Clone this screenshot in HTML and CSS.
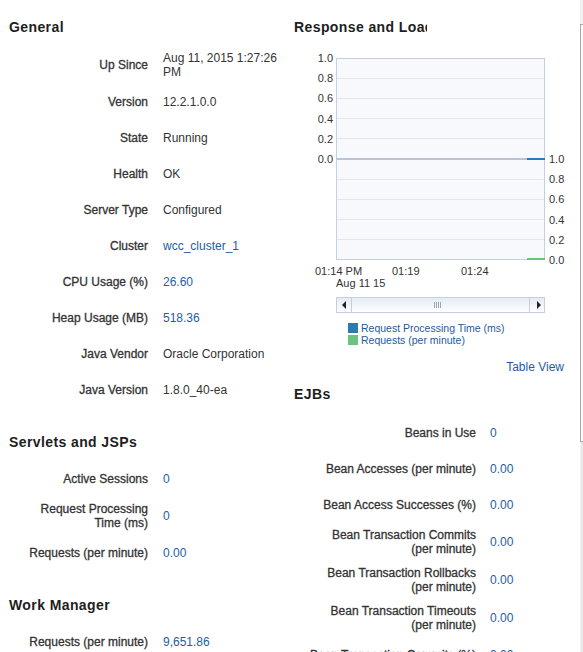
FILE: index.html
```html
<!DOCTYPE html>
<html lang="en">
<head>
    <meta charset="UTF-8">
    <title>Server Overview</title>
    <link rel="stylesheet" href="styles.css">
</head>
<body>
<div class="screen">
    <div class="page">
        <div class="col col-left">
            <h2 class="section-title">General</h2>
            <div class="form">
                <div class="label">Up Since</div><div class="value">Aug 11, 2015 1:27:26<br>PM</div>
                <div class="label">Version</div><div class="value">12.2.1.0.0</div>
                <div class="label">State</div><div class="value">Running</div>
                <div class="label">Health</div><div class="value">OK</div>
                <div class="label">Server Type</div><div class="value">Configured</div>
                <div class="label">Cluster</div><div class="value link">wcc_cluster_1</div>
                <div class="label">CPU Usage (%)</div><div class="value link">26.60</div>
                <div class="label">Heap Usage (MB)</div><div class="value link">518.36</div>
                <div class="label">Java Vendor</div><div class="value">Oracle Corporation</div>
                <div class="label">Java Version</div><div class="value">1.8.0_40-ea</div>
            </div>

            <h2 class="section-title">Servlets and JSPs</h2>
            <div class="form">
                <div class="label">Active Sessions</div><div class="value link">0</div>
                <div class="label">Request Processing<br>Time (ms)</div><div class="value link">0</div>
                <div class="label">Requests (per minute)</div><div class="value link">0.00</div>
            </div>

            <h2 class="section-title">Work Manager</h2>
            <div class="form">
                <div class="label">Requests (per minute)</div><div class="value link">9,651.86</div>
            </div>
        </div>

        <div class="col col-right">
            <h2 class="section-title chart-title">Response and Load</h2>
            <svg class="chart" width="286" height="302" xmlns="http://www.w3.org/2000/svg">
                <defs>
                    <linearGradient id="sb" x1="0" y1="0" x2="0" y2="1">
                        <stop offset="0" stop-color="#e4ebf4"/>
                        <stop offset="1" stop-color="#ffffff"/>
                    </linearGradient>
                </defs>
                <!-- plot -->
                <rect x="42.5" y="10.5" width="208" height="201" fill="#f8f9fc" stroke="#c5cfdf"/>
                <g stroke="#e1e6ef" stroke-width="1">
                    <line x1="43" y1="30.5" x2="250" y2="30.5"/>
                    <line x1="43" y1="50.5" x2="250" y2="50.5"/>
                    <line x1="43" y1="70.5" x2="250" y2="70.5"/>
                    <line x1="43" y1="90.5" x2="250" y2="90.5"/>
                    <line x1="43" y1="131.5" x2="250" y2="131.5"/>
                    <line x1="43" y1="151.5" x2="250" y2="151.5"/>
                    <line x1="43" y1="171.5" x2="250" y2="171.5"/>
                    <line x1="43" y1="191.5" x2="250" y2="191.5"/>
                </g>
                <line x1="42" y1="111" x2="251" y2="111" stroke="#bcc3d3" stroke-width="2"/>
                <line x1="233" y1="111" x2="251" y2="111" stroke="#2a7ab5" stroke-width="2"/>
                <line x1="233" y1="211" x2="251" y2="211" stroke="#6cc27f" stroke-width="2"/>

                <g class="axis" text-anchor="end">
                    <text x="39" y="14">1.0</text>
                    <text x="39" y="34">0.8</text>
                    <text x="39" y="54">0.6</text>
                    <text x="39" y="75">0.4</text>
                    <text x="39" y="95">0.2</text>
                    <text x="39" y="115">0.0</text>
                </g>
                <g class="axis">
                    <text x="255" y="115">1.0</text>
                    <text x="255" y="135">0.8</text>
                    <text x="255" y="155">0.6</text>
                    <text x="255" y="176">0.4</text>
                    <text x="255" y="196">0.2</text>
                    <text x="255" y="216">0.0</text>
                    <text x="21" y="227">01:14 PM</text>
                    <text x="98" y="227">01:19</text>
                    <text x="167" y="227">01:24</text>
                    <text x="42" y="239">Aug 11 15</text>
                </g>

                <!-- time scroller -->
                <rect x="42.5" y="249.5" width="208" height="15" fill="url(#sb)" stroke="#c5cfdf"/>
                <line x1="57.5" y1="250" x2="57.5" y2="264" stroke="#c5cfdf"/>
                <line x1="235.5" y1="250" x2="235.5" y2="264" stroke="#c5cfdf"/>
                <polygon points="48,257 52,253 52,261" fill="#222"/>
                <polygon points="247,257 243,253 243,261" fill="#222"/>
                <g stroke="#9aa5b5">
                    <line x1="140.5" y1="254" x2="140.5" y2="260"/>
                    <line x1="142.5" y1="254" x2="142.5" y2="260"/>
                    <line x1="144.5" y1="254" x2="144.5" y2="260"/>
                    <line x1="146.5" y1="254" x2="146.5" y2="260"/>
                </g>

                <!-- legend -->
                <rect x="54" y="275" width="10" height="10" fill="#2a7ab5"/>
                <rect x="54" y="287" width="10" height="10" fill="#6cc27f"/>
                <text class="legend" x="67" y="284">Request Processing Time (ms)</text>
                <text class="legend" x="67" y="296">Requests (per minute)</text>
            </svg>
            <div class="table-view"><a href="#">Table View</a></div>

            <h2 class="section-title">EJBs</h2>
            <div class="form form-wide">
                <div class="label">Beans in Use</div><div class="value link">0</div>
                <div class="label">Bean Accesses (per minute)</div><div class="value link">0.00</div>
                <div class="label">Bean Access Successes (%)</div><div class="value link">0.00</div>
                <div class="label">Bean Transaction Commits<br>(per minute)</div><div class="value link">0.00</div>
                <div class="label">Bean Transaction Rollbacks<br>(per minute)</div><div class="value link">0.00</div>
                <div class="label">Bean Transaction Timeouts<br>(per minute)</div><div class="value link">0.00</div>
                <div class="label">Bean Transaction Commits (%)</div><div class="value link">0.00</div>
            </div>
        </div>
    </div>

    <div class="vscroll">
        <div class="vscroll-cap"></div>
        <div class="vscroll-thumb"></div>
        <div class="vscroll-track"></div>
    </div>
</div>
</body>
</html>
```

FILE: styles.css
```css
body {
    margin: 0;
    padding: 0;
    height: 652px;
    overflow: hidden;
    background: #fff;
    font-family: "Liberation Sans", Arial, sans-serif;
    font-size: 12px;
    color: #333;
}

.screen {
    display: flex;
    height: 652px;
}

.page {
    flex: 1;
    display: flex;
    padding-top: 18px;
    overflow: hidden;
}

.col-left {
    width: 294px;
    flex: none;
}
.col-left .section-title {
    padding-left: 9px;
}

.col-right {
    width: 286px;
    flex: none;
}

.section-title {
    margin: 0 0 10px 0;
    font-size: 14px;
    line-height: 18px;
    font-weight: bold;
    letter-spacing: 0.4px;
    color: #1e1e1e;
}

.form + .section-title {
    margin-top: 25px;
}

.chart-title {
    width: 133px;
    white-space: nowrap;
    overflow: hidden;
    margin-bottom: 12px;
}

.form {
    display: grid;
    grid-template-columns: 148px 1fr;
    column-gap: 15px;
    align-items: center;
    line-height: 14px;
}
.form-wide {
    grid-template-columns: 182px 1fr;
    column-gap: 14px;
    padding-top: 2px;
}

.label,
.value {
    min-height: 26px;
    padding: 5px 0;
    display: flex;
    align-items: center;
}
.label {
    justify-content: flex-end;
    text-align: right;
    color: #333;
    -webkit-text-stroke: 0.3px #333;
}
.value {
    color: #333;
}
.link {
    color: #1f5ca4;
}

.chart {
    display: block;
}
.chart text {
    font-family: "Liberation Sans", Arial, sans-serif;
}
.axis {
    font-size: 11px;
    fill: #333;
}
.legend {
    font-size: 10.5px;
    fill: #1f5a9a;
}

.table-view {
    margin-top: 10px;
    padding-right: 16px;
    text-align: right;
    line-height: 14px;
}
.table-view a {
    color: #1f5ca4;
    text-decoration: none;
}
.table-view + .section-title {
    margin-top: 11px;
}

.vscroll {
    width: 3px;
    flex: none;
    display: flex;
    flex-direction: column;
}
.vscroll-cap {
    height: 24px;
    background: #f1f1f1;
}
.vscroll-thumb {
    height: 416px;
    background: #fafafa;
    border-left: 1px solid #a8a8a8;
    border-top: 1px solid #a8a8a8;
    border-bottom: 1px solid #a8a8a8;
}
.vscroll-track {
    flex: 1;
    background: #e8e8e8;
    border-left: 1px solid #f3f3f3;
}
```
